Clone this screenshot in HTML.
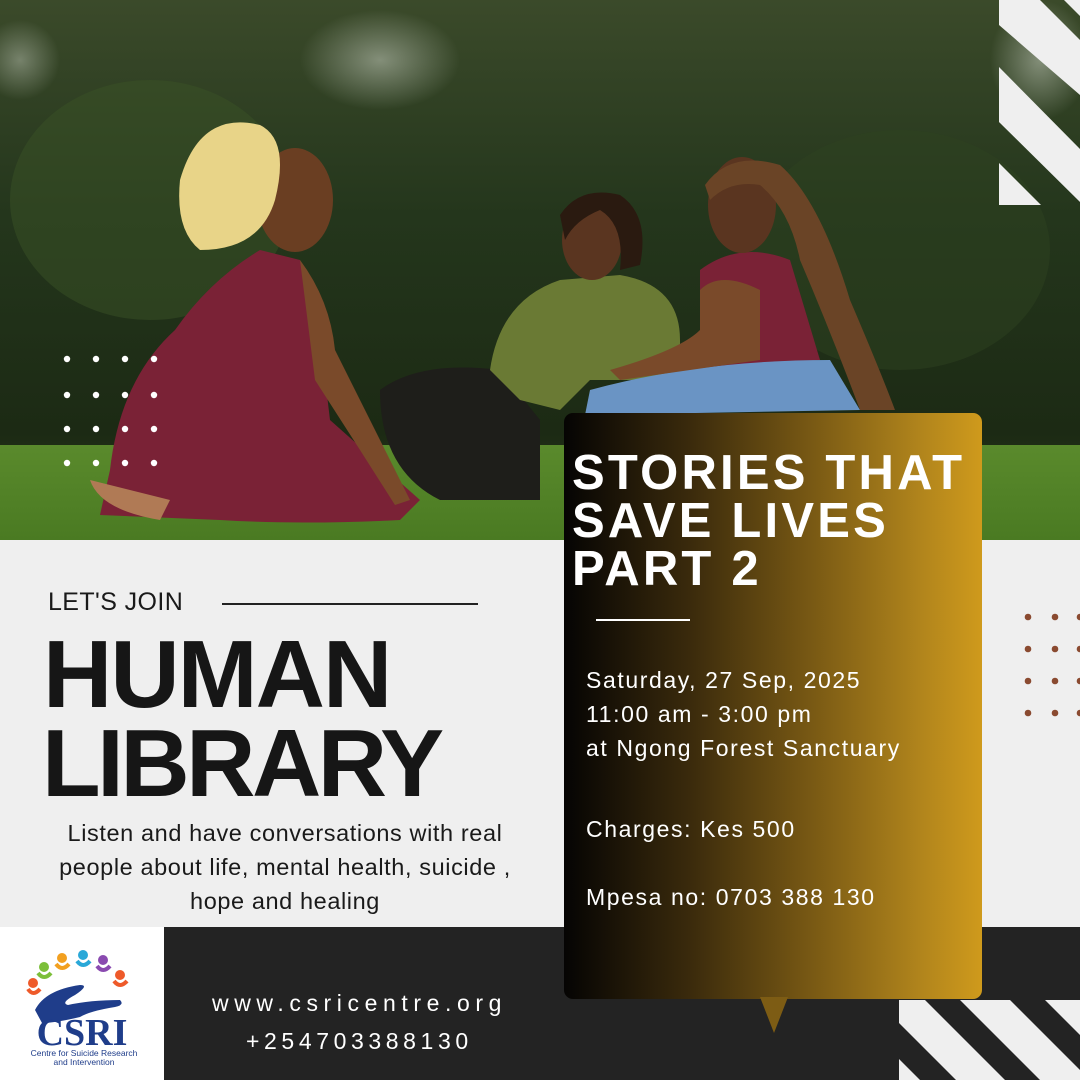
<!DOCTYPE html>
<html><head><meta charset="utf-8">
<style>
*{margin:0;padding:0;box-sizing:border-box}
body{width:1080px;height:1080px;overflow:hidden;background:#efefef;font-family:"Liberation Sans",sans-serif;position:relative}
.abs{position:absolute}
</style></head><body>
<svg class="abs" style="left:0;top:0" width="1080" height="540" viewBox="0 0 1080 540">
<defs>
<linearGradient id="bg" x1="0" y1="0" x2="0" y2="1">
<stop offset="0" stop-color="#3b4a2a"/><stop offset="0.4" stop-color="#24361c"/><stop offset="0.8" stop-color="#1c2a14"/><stop offset="1" stop-color="#2a3a1c"/></linearGradient>
<linearGradient id="gr" x1="0" y1="0" x2="0" y2="1"><stop offset="0" stop-color="#5a8a2c"/><stop offset="1" stop-color="#4a7a22"/></linearGradient>
<radialGradient id="sky" cx="0.5" cy="0.5" r="0.5"><stop offset="0" stop-color="#b8c0b0"/><stop offset="1" stop-color="#b8c0b0" stop-opacity="0"/></radialGradient>
</defs>
<rect width="1080" height="540" fill="url(#bg)"/>
<ellipse cx="380" cy="60" rx="80" ry="50" fill="url(#sky)" opacity="0.6"/>
<ellipse cx="20" cy="60" rx="40" ry="40" fill="url(#sky)" opacity="0.5"/>
<ellipse cx="1040" cy="60" rx="50" ry="60" fill="url(#sky)" opacity="0.6"/>
<ellipse cx="150" cy="200" rx="140" ry="120" fill="#3a5226" opacity="0.5"/>
<ellipse cx="900" cy="250" rx="150" ry="120" fill="#2e4220" opacity="0.5"/>
<rect x="0" y="445" width="1080" height="95" fill="url(#gr)"/>
<path d="M110 470 Q120 380 175 330 Q210 280 260 250 L300 260 Q320 330 330 420 L420 500 L400 520 Q300 525 220 520 L100 515 Z" fill="#7a2236"/>
<path d="M90 480 Q100 510 160 520 L170 500 Z" fill="#b07a55"/>
<ellipse cx="295" cy="200" rx="38" ry="52" fill="#6a3e22"/>
<path d="M180 180 Q200 110 260 125 Q290 140 275 200 Q260 250 200 250 Q175 230 180 180Z" fill="#e8d488"/>
<path d="M300 260 Q330 300 335 350 L380 440 L410 500 L395 505 L360 450 L315 380 Z" fill="#7a4a2a"/>
<path d="M380 390 Q420 360 500 370 L540 420 L540 500 L440 500 Q380 470 380 390Z" fill="#1e1e1a"/>
<path d="M490 370 Q500 300 560 280 L620 275 Q680 285 680 340 L680 380 L590 380 L560 410 L520 400Z" fill="#6a7a34"/>
<ellipse cx="592" cy="240" rx="30" ry="40" fill="#5a3520"/>
<path d="M560 215 Q580 185 620 195 Q650 215 640 265 L620 270 Q625 225 600 210 Q575 220 565 240Z" fill="#2a1a10"/>
<path d="M700 270 Q740 240 790 260 L820 360 L700 370Z" fill="#7a2236"/>
<path d="M590 390 Q700 360 830 360 L860 410 L585 415Z" fill="#6a94c4"/>
<ellipse cx="742" cy="205" rx="34" ry="48" fill="#5a3520"/>
<path d="M705 185 Q730 150 780 165 Q820 200 850 300 Q880 370 895 410 L860 410 Q830 330 800 260 Q790 210 760 185 Q730 180 710 200Z" fill="#6a4426"/>
<path d="M700 290 Q720 270 760 290 L760 360 L620 380 L610 370 Q680 350 700 330Z" fill="#7a4a2a"/>
<g fill="#efefef">
<polygon points="999,0 1040,0 1080,40 1080,95 999,25"/>
<polygon points="999,67 1080,149 1080,202 999,122"/>
<polygon points="999,163 1041,205 999,205"/>
<polygon points="1064,0 1080,0 1080,16"/>
</g>
</svg>
<svg class="abs" style="top:352px;left:60px" width="110" height="120">
<g fill="#fff"><circle cx="7" cy="7" r="3.2"/><circle cx="36" cy="7" r="3.2"/><circle cx="65" cy="7" r="3.2"/><circle cx="94" cy="7" r="3.2"/>
<circle cx="7" cy="43" r="3.2"/><circle cx="36" cy="43" r="3.2"/><circle cx="65" cy="43" r="3.2"/><circle cx="94" cy="43" r="3.2"/>
<circle cx="7" cy="77" r="3.2"/><circle cx="36" cy="77" r="3.2"/><circle cx="65" cy="77" r="3.2"/><circle cx="94" cy="77" r="3.2"/>
<circle cx="7" cy="111" r="3.2"/><circle cx="36" cy="111" r="3.2"/><circle cx="65" cy="111" r="3.2"/><circle cx="94" cy="111" r="3.2"/></g></svg>
<svg class="abs" style="left:1020px;top:610px" width="60" height="110">
<g fill="#8a4a30"><circle cx="8" cy="7" r="3.3"/><circle cx="35" cy="7" r="3.3"/><circle cx="8" cy="39" r="3.3"/><circle cx="35" cy="39" r="3.3"/><circle cx="8" cy="71" r="3.3"/><circle cx="35" cy="71" r="3.3"/><circle cx="8" cy="103" r="3.3"/><circle cx="35" cy="103" r="3.3"/><circle cx="60" cy="7" r="3.3"/><circle cx="60" cy="39" r="3.3"/><circle cx="60" cy="71" r="3.3"/><circle cx="60" cy="103" r="3.3"/></g></svg>
<div class="abs" style="left:48px;top:588px;font-size:25px;color:#1a1a1a;letter-spacing:0.4px">LET'S JOIN</div>
<div class="abs" style="left:222px;top:603px;width:256px;height:1.5px;background:#222"></div>
<div class="abs" style="left:43px;top:630px;font-size:96px;font-weight:bold;color:#161616;line-height:89px;letter-spacing:-2px">HUMAN</div>
<div class="abs" style="left:42px;top:719px;font-size:96px;font-weight:bold;color:#161616;line-height:89px;letter-spacing:-3.5px">LIBRARY</div>
<div class="abs" style="left:0px;top:816px;width:570px;text-align:center;font-size:23.5px;line-height:34px;color:#1a1a1a;letter-spacing:0.6px">Listen and have conversations with real<br>people about life, mental health, suicide ,<br>hope and healing</div>
<div class="abs" style="left:0;top:927px;width:1080px;height:153px;background:#232323"></div>
<div class="abs" style="left:0;top:927px;width:164px;height:153px;background:#fff"></div>
<svg class="abs" style="left:899px;top:1000px" width="181" height="80" viewBox="899 1000 181 80">
<rect x="899" y="1000" width="181" height="80" fill="#efefef"/>
<g fill="#232323">
<polygon points="840,1000 876,1000 956,1080 920,1080"/>
<polygon points="925,1000 960,1000 1040,1080 1005,1080"/>
<polygon points="1010,1000 1045,1000 1125,1080 1090,1080"/>
</g>
</svg>
<div class="abs" style="left:212px;top:990px;font-size:23px;color:#fff;letter-spacing:5.6px">www.csricentre.org</div>
<div class="abs" style="left:246px;top:1028px;font-size:23px;color:#fff;letter-spacing:4.6px">+254703388130</div>
<svg class="abs" style="left:20px;top:945px" width="130" height="125" viewBox="0 0 130 125">
<g><circle cx="13" cy="38" r="5" fill="#ee5a2a"/><circle cx="24" cy="22" r="5" fill="#7cbf3a"/><circle cx="42" cy="13" r="5" fill="#f2a020"/><circle cx="63" cy="10" r="5" fill="#2aa8d8"/><circle cx="83" cy="15" r="5" fill="#8a4ab0"/><circle cx="100" cy="30" r="5" fill="#ee5a2a"/>
<path d="M8 44 q5 8 12 0" stroke="#ee5a2a" stroke-width="4" fill="none"/><path d="M18 28 q6 8 13 0" stroke="#7cbf3a" stroke-width="4" fill="none"/><path d="M36 19 q6 8 13 0" stroke="#f2a020" stroke-width="4" fill="none"/><path d="M57 16 q6 8 13 0" stroke="#2aa8d8" stroke-width="4" fill="none"/><path d="M77 21 q6 8 13 0" stroke="#8a4ab0" stroke-width="4" fill="none"/><path d="M94 36 q6 8 13 0" stroke="#ee5a2a" stroke-width="4" fill="none"/></g>
<path d="M15 65 Q25 45 60 40 Q70 40 55 50 Q40 58 48 60 Q70 55 100 55 Q105 60 95 62 Q70 66 60 72 Q35 78 22 78 Z" fill="#1f3d8a"/>
<text x="62" y="100" text-anchor="middle" font-family="Liberation Serif,serif" font-weight="bold" font-size="38" fill="#1f3d8a">CSRI</text>
<text x="64" y="111" text-anchor="middle" font-size="8.5" fill="#1f3d8a">Centre for Suicide Research</text>
<text x="64" y="120" text-anchor="middle" font-size="8.5" fill="#1f3d8a">and Intervention</text>
</svg>
<div class="abs" style="left:564px;top:413px;width:418px;height:586px;border-radius:9px;background:linear-gradient(90deg,#050403 0%,#3a2a0c 30%,#7a5a14 60%,#b0841c 85%,#cf9a1c 100%)"></div>
<div class="abs" style="left:760px;top:997px;width:0;height:0;border-left:14px solid transparent;border-right:14px solid transparent;border-top:36px solid #7d5c14"></div>
<div class="abs" style="left:572px;top:449px;font-size:49px;font-weight:bold;color:#fff;line-height:48px;letter-spacing:3.2px">STORIES THAT<br>SAVE LIVES<br>PART 2</div>
<div class="abs" style="left:596px;top:619px;width:94px;height:1.5px;background:#fff"></div>
<div class="abs" style="left:586px;top:663px;font-size:23px;color:#fff;line-height:34px;letter-spacing:1.6px">Saturday, 27 Sep, 2025<br>11:00 am - 3:00 pm<br>at Ngong Forest Sanctuary</div>
<div class="abs" style="left:586px;top:816px;font-size:23px;color:#fff;letter-spacing:1.6px">Charges: Kes 500</div>
<div class="abs" style="left:586px;top:884px;font-size:23px;color:#fff;letter-spacing:1.6px">Mpesa no: 0703 388 130</div>
</body></html>
